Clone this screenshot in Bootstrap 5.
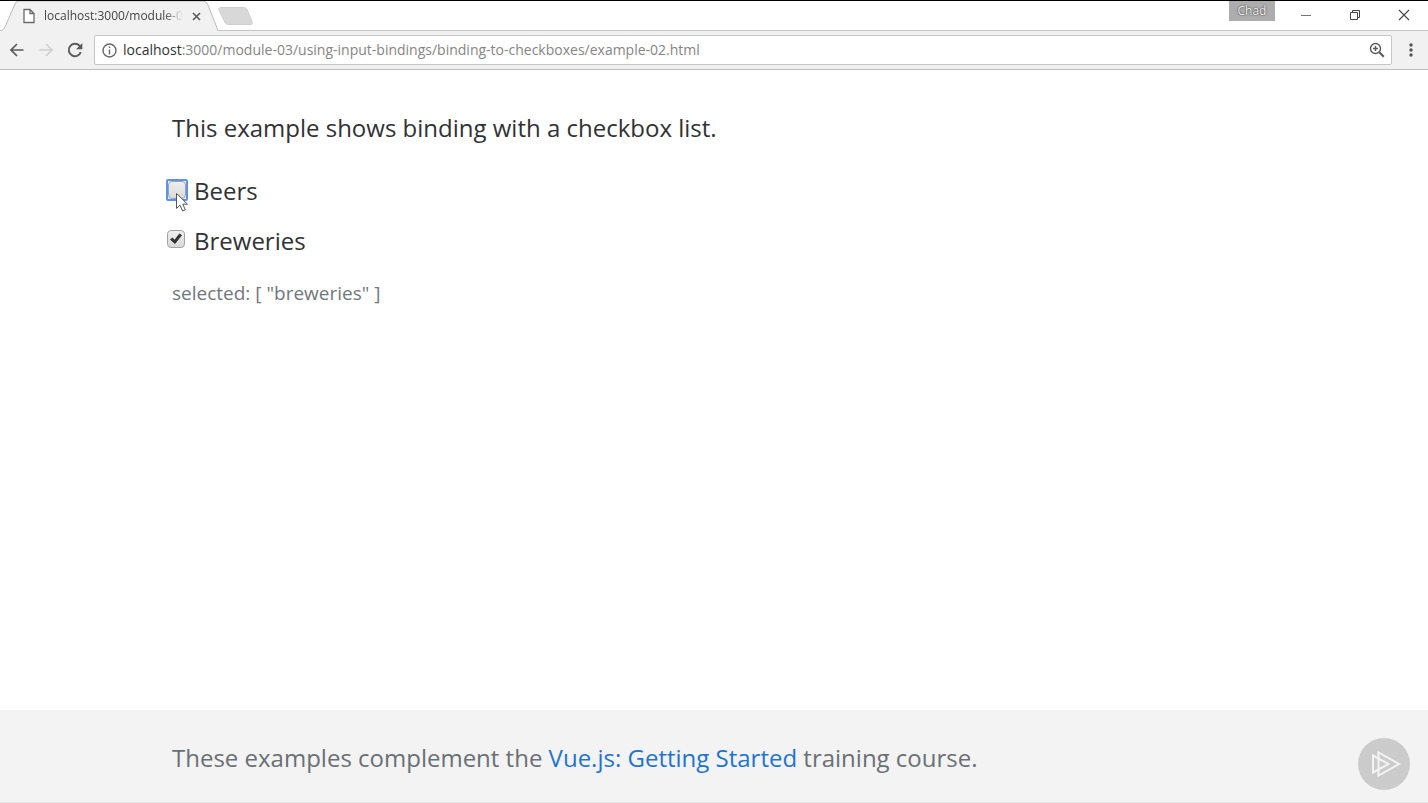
<!DOCTYPE html>
<html lang="en">
<head>
<meta charset="utf-8">
<meta name="viewport" content="width=device-width, initial-scale=1">
<title>Binding to checkboxes</title>
<link href="https://cdn.jsdelivr.net/npm/bootstrap@5.3.0/dist/css/bootstrap.min.css" rel="stylesheet">
<style>
  body { font-family: "Open Sans", "Noto Sans", sans-serif; color: #303234; background: #fff; }
  svg { display: block; flex: none; }
  button { border: 0; background: none; padding: 0; color: #5a5a5a; }

  /* Window frame */
  .title-bar { height: 31px; border-top: 1px solid #000; border-bottom: 1px solid #c4c4c4; }
  .browser-tab { width: 218px; height: 30px; margin-bottom: -1px; padding: 0 15px 0 22px; }
  .tab-shape { position: absolute; inset: 0; }
  .tab-title { font-size: 12px; line-height: 16px; color: #444; width: 140px;
    -webkit-mask-image: linear-gradient(90deg, #000 120px, transparent 139px);
    mask-image: linear-gradient(90deg, #000 120px, transparent 139px); }
  .user-chip { height: 20px; width: 46px; background: #adadad; color: #f4f4f4; font-size: 12px; line-height: 19px; text-shadow: 0 0 2px #444, 0 0 1px #444; }
  .window-buttons { gap: 37px; padding: 0 18px 2px 25px; }

  /* Toolbar */
  .tool-bar { height: 39px; background: #f1f1f1; border-bottom: 1px solid #bdbdbd; padding: 0 14px 0 8px; }
  .nav-buttons { gap: 11px; width: 86px; }
  .address { height: 30px; background: #fff; border: 1px solid #c6c6c6; border-radius: 2px; padding: 0 6px; font-size: 14px; line-height: 20px; }
  .address label { color: #333; margin-left: 5px; }
  .address input { border: 0; padding: 0; outline: 0; color: #858585; min-width: 0; }

  /* Page */
  .page-width { max-width: 1108px; }
  .lead-text { font-size: 24px; line-height: 36px; }
  .main-area { padding-top: 40px; }
  .check-list { margin: 20px 0 0 -5px; }
  .check-row { height: 50px; gap: 9px; }
  .check-row input { appearance: none; width: 18px; height: 18px; margin: 0 0 4px; border: 1px solid #a3a3a3; border-radius: 4px; background: linear-gradient(#efefef, #d9d9d9); }
  .check-row input:checked { background: url("data:image/svg+xml,%3Csvg xmlns='http://www.w3.org/2000/svg' viewBox='0 0 16 16'%3E%3Cpath d='M2 8.500 4.500 6.500l2 2.200 4.900-6.200L14 4.200 7 13z' fill='%23333'/%3E%3C/svg%3E") center / 16px no-repeat, linear-gradient(#efefef, #d9d9d9); }
  /* The focus frame is square, so it is drawn behind the rounded box */
  .focus-frame { width: 22px; height: 22px; padding: 1px; margin: 0 -3px 3px -1px; border: 2px solid #5b93ea; border-radius: 2px; background: #eef3fb; }
  .focus-frame input { margin: -1px; outline: 0; }
  .pointer { position: absolute; left: 8px; top: 26px; z-index: 2; }
  .selection { font-size: 19px; line-height: 28px; color: #71777c; margin-top: 13px; white-space: pre; }
  .page-foot { background: #f3f3f3; border-bottom: 1px solid #e2e2e2; height: 93px; padding-top: 4px; }
  .page-foot p { color: #6a7075; }
  .page-foot a { color: #1f74d0; }
  .brand-mark { position: absolute; right: 18px; bottom: 12px; }
</style>
</head>
<body class="d-flex flex-column min-vh-100">
  <header>
    <div class="title-bar d-flex">
      <div class="browser-tab position-relative d-flex align-items-center">
        <svg class="tab-shape" width="218" height="30" viewBox="0 0 218 30"><path d="M0 30Q4 29 5 26L15 3Q16 0 19 0H203Q206 0 208 4L217 27Q218 30 218 30" fill="#f1f1f1" stroke="#bcbcbc"/></svg>
        <svg class="position-relative" width="14" height="16" viewBox="0 0 14 16" fill="#fff" stroke="#6b6b6b" stroke-width="1.3"><path d="M2 1.5h6l4 4v9H2zM8 1.5v4h4"/></svg>
        <span class="tab-title position-relative ms-2 text-nowrap overflow-hidden">localhost:3000/module-0</span>
        <button class="position-relative ms-2" aria-label="Close tab"><svg width="9" height="9" viewBox="0 0 9 9" stroke="#5a5a5a" stroke-width="1.6"><path d="M1 1l7 7M8 1L1 8"/></svg></button>
      </div>
      <button class="align-self-center" aria-label="New tab"><svg width="36" height="18" viewBox="0 0 36 18"><path d="M3 .5h23q2 0 3 2l5 12q1 3-1 3H10q-2 0-3-2L1 3Q0 .5 3 .5" fill="#d8d8d8" stroke="#cfcfcf"/></svg></button>
      <div class="user-chip ms-auto text-center">Chad</div>
      <div class="window-buttons d-flex align-items-center">
        <button aria-label="Minimize"><svg width="12" height="12" viewBox="0 0 12 12" stroke="#777"><path d="M1 6.5h10"/></svg></button>
        <button aria-label="Restore"><svg width="12" height="12" viewBox="0 0 12 12" fill="none" stroke="#444"><path d="M1.500 3.500h7v7h-7zM3.500 3.500v-2h7v7h-2"/></svg></button>
        <button aria-label="Close window"><svg width="12" height="12" viewBox="0 0 12 12" stroke="#444" stroke-width="1.1"><path d="M1 1l10 10M11 1L1 11"/></svg></button>
      </div>
    </div>
    <div class="tool-bar d-flex align-items-center">
      <div class="nav-buttons d-flex flex-shrink-0">
        <button aria-label="Back"><svg width="18" height="18" viewBox="0 0 18 18" fill="none" stroke="#5a5a5a" stroke-width="1.700"><path d="M15.500 9H3M9 3L3 9l6 6"/></svg></button>
        <button aria-label="Forward"><svg width="18" height="18" viewBox="0 0 18 18" fill="none" stroke="#d0d0d0" stroke-width="1.700"><path d="M2.500 9H15M9 3l6 6-6 6"/></svg></button>
        <button aria-label="Reload"><svg width="18" height="18" viewBox="0 0 18 18" fill="none" stroke="#5a5a5a" stroke-width="1.900"><path d="M14.800 11.200A6.200 6.200 0 1 1 13.500 4.700L15 6.200"/><path d="M16.300 2v6.200h-6.200z" fill="#5a5a5a" stroke="none"/></svg></button>
      </div>
      <div class="address d-flex align-items-center flex-grow-1">
        <svg width="17" height="17" viewBox="0 0 17 17" fill="none" stroke="#666" stroke-width="1.400"><circle cx="8.500" cy="8.500" r="6.500"/><path d="M8.500 7.500v5M8.500 4.500v1.600"/></svg>
        <label for="url">localhost</label>
        <input id="url" class="flex-grow-1" type="text" value=":3000/module-03/using-input-bindings/binding-to-checkboxes/example-02.html">
        <button aria-label="Zoom"><svg width="16" height="16" viewBox="0 0 16 16" fill="none" stroke="#5a5a5a" stroke-width="1.400"><circle cx="6.500" cy="6.500" r="5"/><path d="M4 6.500h5M6.500 4v5"/><path d="M10.300 10.300l4.500 4.500" stroke-width="2"/></svg></button>
      </div>
      <button class="ms-3" aria-label="Menu"><svg width="6" height="16" viewBox="0 0 6 16" fill="#555"><circle cx="3" cy="3" r="1.700"/><circle cx="3" cy="8" r="1.700"/><circle cx="3" cy="13" r="1.700"/></svg></button>
    </div>
  </header>

  <main class="container-fluid page-width main-area flex-grow-1">
    <p class="lead-text mb-0">This example shows binding with a checkbox list.</p>
    <div class="check-list">
      <div class="check-row position-relative d-flex align-items-center">
        <span class="focus-frame d-flex"><input type="checkbox" id="beers"></span>
        <label class="lead-text" for="beers">Beers</label>
        <svg class="pointer" width="14" height="21" viewBox="0 0 14 21"><path d="M1.500 1.500v15l3.500-3.300 2.600 5.800 2.700-1.200-2.500-5.600h4.700z" fill="#fff" stroke="#555"/></svg>
      </div>
      <div class="check-row d-flex align-items-center">
        <input type="checkbox" id="breweries" checked>
        <label class="lead-text" for="breweries">Breweries</label>
      </div>
    </div>
    <div class="selection">selected: [ "breweries" ]</div>
  </main>

  <footer class="page-foot position-relative d-flex align-items-center">
    <div class="container-fluid page-width">
      <p class="lead-text mb-0">These examples complement the <a class="text-decoration-none" href="#">Vue.js: Getting Started</a> training course.</p>
    </div>
    <svg class="brand-mark" width="52" height="52" viewBox="0 0 52 52" fill="none" stroke="#f3f3f3" stroke-width="2"><circle cx="26" cy="26" r="26" fill="#cbcbcb" stroke="none"/><path d="M20.500 14.500v23L41 26zM15 17.500v17L30.500 26z"/></svg>
  </footer>
<script src="https://cdn.jsdelivr.net/npm/bootstrap@5.3.0/dist/js/bootstrap.bundle.min.js"></script>
</body>
</html>
